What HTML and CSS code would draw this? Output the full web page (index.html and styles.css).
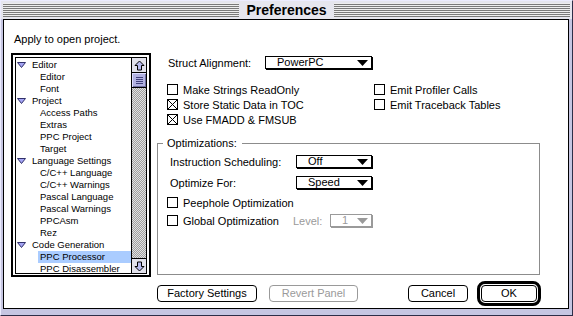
FILE: index.html
```html
<!DOCTYPE html>
<html lang="en">
<head>
    <meta charset="utf-8" />
    <title>Preferences</title>
    <link rel="stylesheet" href="styles.css">
</head>
<body>
<div class="window">
    <div class="titlebar">
        <div class="stripes"></div>
        <div class="title">Preferences</div>
        <div class="stripes"></div>
    </div>

    <div class="content">
        <p class="scope">Apply to open project.</p>

        <div class="main">
            <!-- panel list -->
            <div class="list-frame">
                <div class="list">
                    <ul class="items">
                        <li class="group"><svg class="twisty" width="9" height="6" viewBox="0 0 9 6"><path d="M0.5 0.5H8.5L4.5 5.5Z"/></svg>Editor</li>
                        <li class="item">Editor</li>
                        <li class="item">Font</li>
                        <li class="group"><svg class="twisty" width="9" height="6" viewBox="0 0 9 6"><path d="M0.5 0.5H8.5L4.5 5.5Z"/></svg>Project</li>
                        <li class="item">Access Paths</li>
                        <li class="item">Extras</li>
                        <li class="item">PPC Project</li>
                        <li class="item">Target</li>
                        <li class="group"><svg class="twisty" width="9" height="6" viewBox="0 0 9 6"><path d="M0.5 0.5H8.5L4.5 5.5Z"/></svg>Language Settings</li>
                        <li class="item">C/C++ Language</li>
                        <li class="item">C/C++ Warnings</li>
                        <li class="item">Pascal Language</li>
                        <li class="item">Pascal Warnings</li>
                        <li class="item">PPCAsm</li>
                        <li class="item">Rez</li>
                        <li class="group"><svg class="twisty" width="9" height="6" viewBox="0 0 9 6"><path d="M0.5 0.5H8.5L4.5 5.5Z"/></svg>Code Generation</li>
                        <li class="item selected">PPC Processor</li>
                        <li class="item">PPC Disassembler</li>
                    </ul>
                    <div class="scrollbar">
                        <div class="arrow up"><svg width="11" height="11" viewBox="0 0 11 11"><path d="M5.5 1L10 5.5H7.5V10H3.5V5.5H1Z"/></svg></div>
                        <div class="thumb"><div class="grip"></div></div>
                        <div class="track"></div>
                        <div class="arrow down"><svg width="11" height="11" viewBox="0 0 11 11"><path d="M5.5 10L10 5.5H7.5V1H3.5V5.5H1Z"/></svg></div>
                    </div>
                </div>
            </div>

            <!-- PPC Processor panel -->
            <div class="settings">
                <div class="field-row struct">
                    <span class="field-label">Struct Alignment:</span>
                    <div class="popup popup-struct">
                        <span class="value">PowerPC</span>
                        <svg class="caret" width="11" height="6" viewBox="0 0 11 6"><path d="M0 0H11L5.5 6Z"/></svg>
                    </div>
                </div>

                <div class="checks">
                    <div class="check"><span class="box"></span>Make Strings ReadOnly</div>
                    <div class="check"><span class="box"></span>Emit Profiler Calls</div>
                    <div class="check"><span class="box"><svg width="9" height="9" viewBox="0 0 9 9"><path d="M0 0L9 9M9 0L0 9"/></svg></span>Store Static Data in TOC</div>
                    <div class="check"><span class="box"></span>Emit Traceback Tables</div>
                    <div class="check"><span class="box"><svg width="9" height="9" viewBox="0 0 9 9"><path d="M0 0L9 9M9 0L0 9"/></svg></span>Use FMADD &amp; FMSUB</div>
                </div>

                <fieldset class="group-box">
                    <legend>Optimizations:</legend>
                    <div class="opt-row first">
                        <span class="opt-label">Instruction Scheduling:</span>
                        <div class="popup popup-opt">
                            <span class="value">Off</span>
                            <svg class="caret" width="11" height="6" viewBox="0 0 11 6"><path d="M0 0H11L5.5 6Z"/></svg>
                        </div>
                    </div>
                    <div class="opt-row">
                        <span class="opt-label">Optimize For:</span>
                        <div class="popup popup-opt">
                            <span class="value">Speed</span>
                            <svg class="caret" width="11" height="6" viewBox="0 0 11 6"><path d="M0 0H11L5.5 6Z"/></svg>
                        </div>
                    </div>
                    <div class="check peephole"><span class="box"></span>Peephole Optimization</div>
                    <div class="opt-row global">
                        <div class="check global-check"><span class="box"></span>Global Optimization</div>
                        <span class="level-label">Level:</span>
                        <div class="popup popup-level disabled">
                            <span class="value">1</span>
                            <svg class="caret" width="11" height="6" viewBox="0 0 11 6"><path d="M0 0H11L5.5 6Z"/></svg>
                        </div>
                    </div>
                </fieldset>
            </div>
        </div>

        <div class="buttons">
            <button class="btn factory">Factory Settings</button>
            <button class="btn revert" disabled>Revert Panel</button>
            <button class="btn cancel">Cancel</button>
            <span class="default-ring"><button class="btn ok">OK</button></span>
        </div>
    </div>
</div>
</body>
</html>
```

FILE: styles.css
```css
* {
    box-sizing: border-box;
}

body {
    margin: 0;
    background: #ffffff;
    font-family: 'Liberation Sans', Arial, sans-serif;
    font-size: 11px;
    color: #000000;
}

/* window frame */
.window {
    width: 573px;
    height: 316px;
    display: flex;
    flex-direction: column;
    background: #c6c6e2;
    border: 1px solid;
    border-color: #ececff #2e2e48 #2e2e48 #ececff;
    padding: 0 3px 6px 2px;
}

.titlebar {
    height: 18px;
    display: flex;
    align-items: center;
    margin: 0 -3px 0 -2px;
    padding: 0 2px;
    background: #e6e6ee;
}

.stripes {
    flex: 1;
    height: 14px;
    background: repeating-linear-gradient(to bottom, #eeeeee 0 1px, #7a7a7a 1px 2px);
}

.title {
    padding: 0 7px;
    font-weight: bold;
    font-size: 14px;
    line-height: 16px;
}

.content {
    flex: 1;
    display: flex;
    flex-direction: column;
    background: #ffffff;
    border: 1px solid #000000;
    padding: 13px 0 0 7px;
}

.scope {
    margin: 0 0 8px 3px;
    height: 12px;
    line-height: 12px;
}

.main {
    display: flex;
    gap: 6px;
    height: 224px;
}

/* list of panels */
.list-frame {
    width: 140px;
    height: 224px;
    border: 2px solid #000000;
    padding: 2px 2px 1px 2px;
}

.list {
    height: 100%;
    display: flex;
    border: 1px solid #000000;
}

.items {
    flex: 1;
    list-style: none;
    margin: 0;
    padding: 1px 0 0 0;
    overflow: hidden;
    font-size: 9.5px;
}

.items li {
    height: 12px;
    line-height: 12px;
    display: flex;
    align-items: center;
    white-space: nowrap;
}

.group {
    padding-left: 1px;
}

.twisty {
    margin-right: 6px;
    fill: #a4a4f4;
    stroke: #30306a;
}

.item {
    margin-left: 22px;
    padding-left: 2px;
}

.item.selected {
    background: #aaccff;
}

.scrollbar {
    width: 15px;
    display: flex;
    flex-direction: column;
    border-left: 1px solid #000000;
}

.arrow {
    height: 15px;
    display: flex;
    align-items: center;
    justify-content: center;
    background: #e2e2ec;
}

.arrow svg {
    fill: #b8bcf0;
    stroke: #000000;
}

.arrow.up {
    border-bottom: 1px solid #000000;
}

.arrow.down {
    border-top: 1px solid #000000;
}

.thumb {
    height: 15px;
    display: flex;
    align-items: center;
    justify-content: center;
    background: #b2b2e2;
    border-bottom: 1px solid #000000;
    box-shadow: inset 1px 1px #dedeff, inset -1px -1px #6e6ea0;
}

.grip {
    width: 7px;
    height: 7px;
    background: repeating-linear-gradient(to bottom, #40407c 0 1px, transparent 1px 2px);
}

.track {
    flex: 1;
    background: repeating-conic-gradient(#a0a0a0 0 25%, #e2e2e2 0 50%) 0 0 / 2px 2px;
}

/* right side */
.settings {
    width: 384px;
    display: flex;
    flex-direction: column;
}

.field-row {
    display: flex;
    align-items: center;
}

.struct {
    height: 13px;
    margin: 3px 0 0 10px;
}

.field-label {
    width: 98px;
    padding-left: 1px;
}

.popup {
    height: 13px;
    display: flex;
    align-items: center;
    padding: 0 3px 0 11px;
    background: #ffffff;
    border: 1px solid #000000;
    box-shadow: 1px 1px 0 #000000;
}

.popup .value {
    flex: 1;
    line-height: 11px;
}

.caret {
    fill: #000000;
}

.popup-struct { width: 107px; }
.popup-opt { width: 76px; }
.popup-level { width: 42px; }

.popup.disabled {
    color: #9a9a9a;
    border-color: #9a9a9a;
    box-shadow: 1px 1px 0 #9a9a9a;
}

.popup.disabled .caret {
    fill: #9a9a9a;
}

.checks {
    display: grid;
    grid-template-columns: 207px auto;
    row-gap: 4px;
    margin: 15px 0 0 10px;
}

.check {
    height: 11px;
    display: flex;
    align-items: center;
    gap: 5px;
    line-height: 12px;
    white-space: nowrap;
}

.box {
    width: 11px;
    height: 11px;
    flex: none;
    display: flex;
    align-items: center;
    justify-content: center;
    border: 1px solid #000000;
    background: #ffffff;
}

.box svg {
    stroke: #000000;
}

/* Optimizations group */
.group-box {
    flex: 1;
    margin: 12px 1px 2px 0;
    padding: 0 0 0 9px;
    border: 1px solid #8c8c8c;
    min-width: 0;
}

.group-box legend {
    margin-left: -4px;
    padding: 0 5px 0 4px;
    line-height: 12px;
}

.opt-row {
    height: 13px;
    display: flex;
    align-items: center;
    margin-top: 8px;
}

.opt-row.first {
    margin-top: 6px;
}

.opt-label {
    width: 129px;
    padding-left: 3px;
}

.peephole {
    margin-top: 8px;
}

.opt-row.global {
    margin-top: 6px;
}

.global-check {
    width: 126px;
}

.level-label {
    width: 37px;
    color: #9a9a9a;
}

/* bottom buttons */
.buttons {
    height: 25px;
    display: flex;
    align-items: center;
    margin-top: 4px;
    padding-left: 146px;
}

.btn {
    height: 17px;
    padding: 0;
    font-family: inherit;
    font-size: 11px;
    line-height: 15px;
    color: #000000;
    background: #ffffff;
    border: 1px solid #000000;
    border-radius: 4px;
}

.factory { width: 100px; }

.revert {
    width: 89px;
    margin-left: 12px;
    color: #9a9a9a;
    border-color: #9a9a9a;
}

.cancel {
    width: 60px;
    margin-left: 50px;
}

.default-ring {
    height: 25px;
    margin-left: 9px;
    display: flex;
    border: 3px solid #000000;
    border-radius: 8px;
    padding: 1px;
}

.ok { width: 56px; }
```
